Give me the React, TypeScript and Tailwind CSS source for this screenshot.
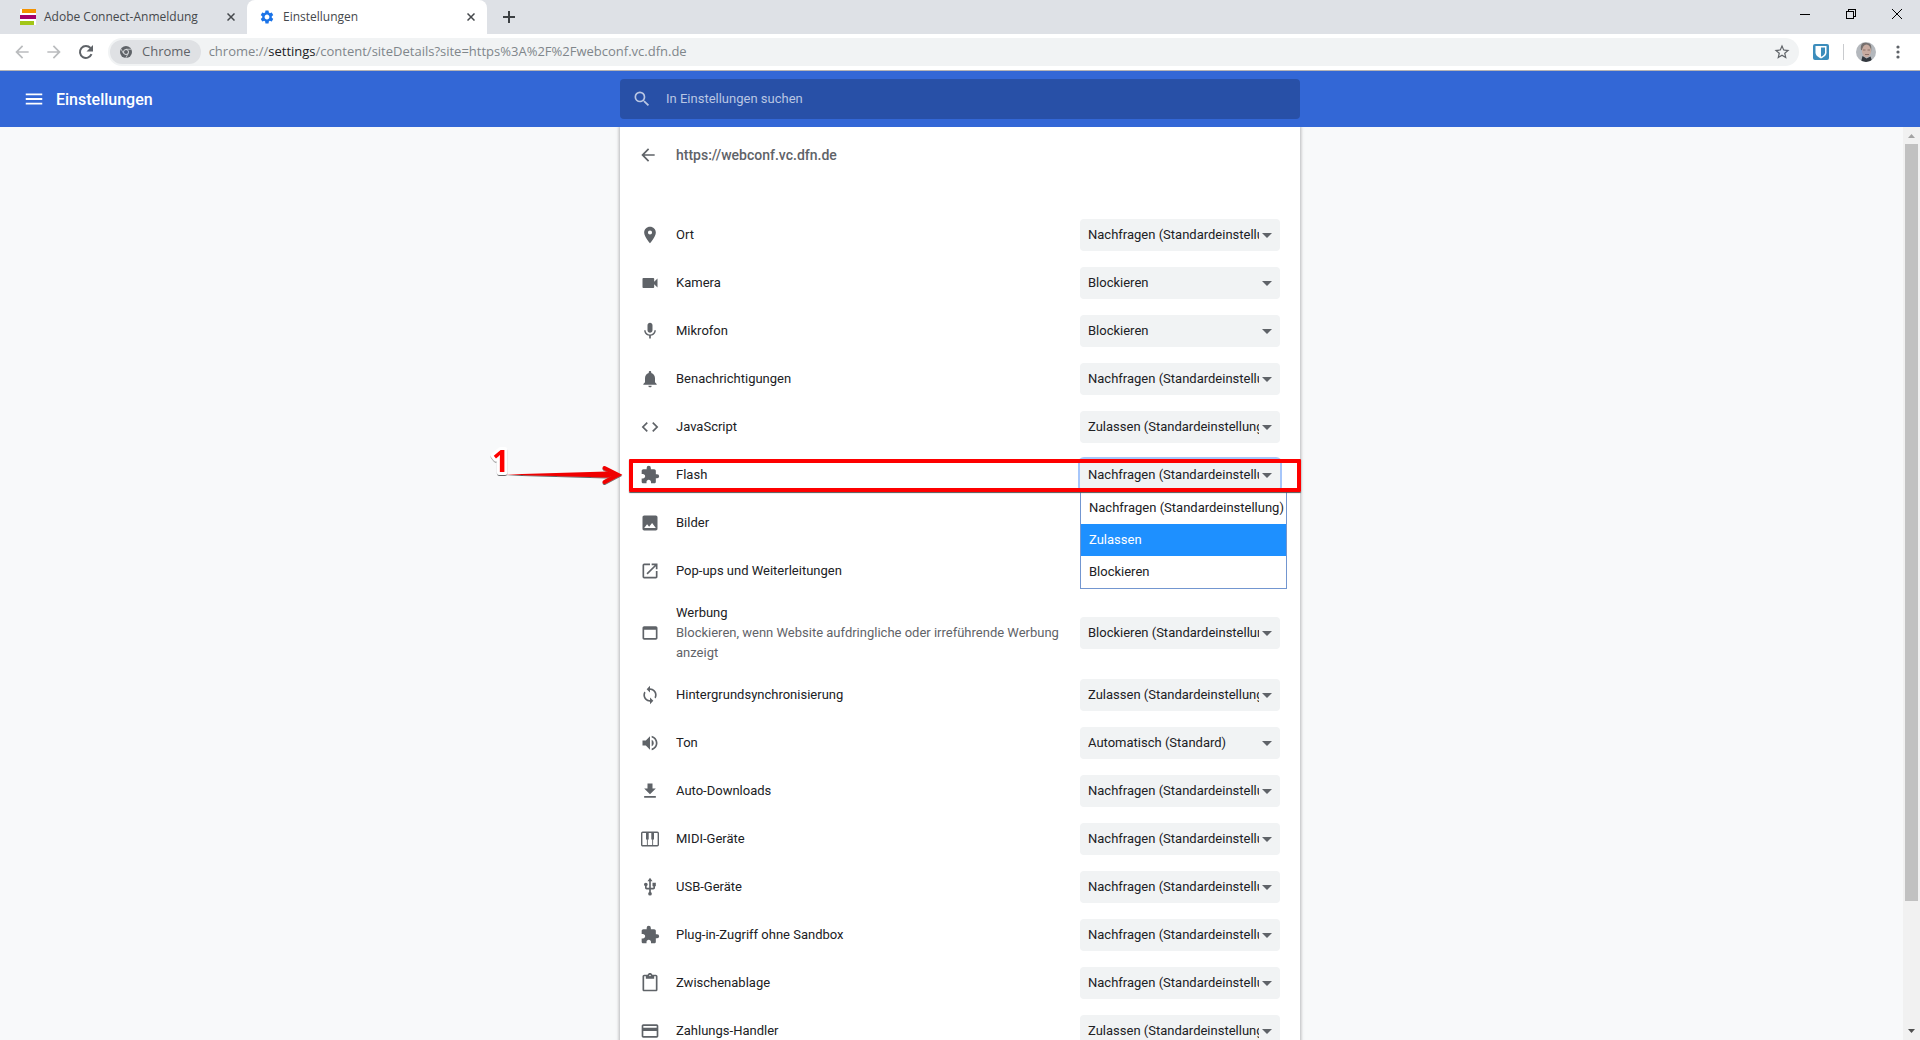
import { useState } from "react";
import type { IconType } from "react-icons";
import {
  MdArrowBack,
  MdCode,
  MdContentPaste,
  MdExtension,
  MdImage,
  MdLocationOn,
  MdMenu,
  MdMic,
  MdNotifications,
  MdOpenInNew,
  MdPayment,
  MdSearch,
  MdSettings,
  MdStarBorder,
  MdSync,
  MdUsb,
  MdVideocam,
  MdVolumeUp,
} from "react-icons/md";

const ASK = "Nachfragen (Standardeinstellung)";
const ALLOW = "Zulassen (Standardeinstellung)";
const BLOCK = "Blockieren (Standardeinstellung)";

const DownloadIcon: IconType = ({ className }) => (
  <svg viewBox="0 0 24 24" fill="currentColor" className={className}>
    <path d="M19 9h-4V3H9v6H5l7 7 7-7zM5 18v2h14v-2H5z" />
  </svg>
);

const WindowIcon: IconType = ({ className }) => (
  <svg viewBox="0 0 24 24" fill="currentColor" className={className}>
    <path d="M19 4H5c-1.11 0-2 .9-2 2v12c0 1.1.89 2 2 2h14c1.1 0 2-.9 2-2V6c0-1.1-.9-2-2-2zm0 14H5V8h14v10z" />
  </svg>
);

const MidiIcon: IconType = ({ className }) => (
  <svg viewBox="0 0 20 20" fill="currentColor" className={className}>
    <rect x="1.7" y="3.2" width="16.600" height="13.600" rx="1" fill="none" stroke="currentColor" strokeWidth="1.400" />
    <path d="M6 3h2.700v7.500H6zM11.300 3H14v7.500h-2.700zM6.900 10h.9v7h-.9zM12.200 10h.9v7h-.9z" />
  </svg>
);

type Permission = { label: string; icon: IconType; value: string; note?: string; open?: boolean };

const permissions: Permission[] = [
  { label: "Ort", icon: MdLocationOn, value: ASK },
  { label: "Kamera", icon: MdVideocam, value: "Blockieren" },
  { label: "Mikrofon", icon: MdMic, value: "Blockieren" },
  { label: "Benachrichtigungen", icon: MdNotifications, value: ASK },
  { label: "JavaScript", icon: MdCode, value: ALLOW },
  { label: "Flash", icon: MdExtension, value: ASK, open: true },
  { label: "Bilder", icon: MdImage, value: ALLOW },
  { label: "Pop-ups und Weiterleitungen", icon: MdOpenInNew, value: BLOCK },
  {
    label: "Werbung",
    icon: WindowIcon,
    value: BLOCK,
    note: "Blockieren, wenn Website aufdringliche oder irreführende Werbung anzeigt",
  },
  { label: "Hintergrundsynchronisierung", icon: MdSync, value: ALLOW },
  { label: "Ton", icon: MdVolumeUp, value: "Automatisch (Standard)" },
  { label: "Auto-Downloads", icon: DownloadIcon, value: ASK },
  { label: "MIDI-Geräte", icon: MidiIcon, value: ASK },
  { label: "USB-Geräte", icon: MdUsb, value: ASK },
  { label: "Plug-in-Zugriff ohne Sandbox", icon: MdExtension, value: ASK },
  { label: "Zwischenablage", icon: MdContentPaste, value: ASK },
  { label: "Zahlungs-Handler", icon: MdPayment, value: ALLOW },
];

const CloseIcon = () => (
  <svg viewBox="0 0 8 8" className="size-2 stroke-[#45484c]" strokeWidth="1.500">
    <path d="M.5.5l7 7M7.500.5l-7 7" />
  </svg>
);

const TabStrip = () => (
  <div className="flex h-[34px] items-stretch bg-[#dee1e6] font-['Open_Sans','Segoe_UI',sans-serif] text-xs text-[#45484c]">
    <div className="flex w-[247px] items-center pl-5">
      <svg viewBox="0 0 16 16" className="size-4">
        <path fill="#fff" d="M0 0h16v16H0z" />
        <path fill="#f39200" d="M2 0h14v4H2z" />
        <path fill="#a5006b" d="M0 6h16v4H0z" />
        <path fill="#a2c617" d="M0 12h14v4H0z" />
      </svg>
      <span className="ml-2 flex-1 whitespace-nowrap">Adobe Connect-Anmeldung</span>
      <button aria-label="Tab schließen" className="p-3">
        <CloseIcon />
      </button>
    </div>
    <div className="flex w-[240px] items-center rounded-t-lg bg-white pl-3">
      <MdSettings className="size-4 text-[#1a73e8]" />
      <span className="ml-2 flex-1">Einstellungen</span>
      <button aria-label="Tab schließen" className="p-3">
        <CloseIcon />
      </button>
    </div>
    <button aria-label="Neuer Tab" className="px-4">
      <svg viewBox="0 0 12 12" className="size-3 stroke-[#3c4043]" strokeWidth="2">
        <path d="M6 0v12M0 6h12" />
      </svg>
    </button>
    <div className="ml-auto flex items-start pt-2 text-black">
      <button aria-label="Minimieren" className="px-[18px]">
        <svg viewBox="0 0 10 12" className="h-3 w-2.5 stroke-current" shapeRendering="crispEdges">
          <path d="M0 6.500h10" />
        </svg>
      </button>
      <button aria-label="Verkleinern" className="px-[18px]">
        <svg viewBox="0 0 10 12" className="h-3 w-2.5 fill-none stroke-current" shapeRendering="crispEdges">
          <path d="M.5 3.500h7v7h-7zM2.500 3.500v-2h7v7h-2" />
        </svg>
      </button>
      <button aria-label="Schließen" className="px-[18px]">
        <svg viewBox="0 0 10 12" className="h-3 w-2.5 stroke-current">
          <path d="M0 1l10 10M10 1L0 11" />
        </svg>
      </button>
    </div>
  </div>
);

const ChromeLogo = () => (
  <svg viewBox="0 0 24 24" className="size-3">
    <circle cx="12" cy="12" r="12" fill="#5f6368" />
    <circle cx="12" cy="12" r="5" fill="none" stroke="#dfe1e4" strokeWidth="2" />
    <path d="M12 6.500h11M7 15L2 6M16.500 15l-5 9" stroke="#dfe1e4" strokeWidth="1.500" />
  </svg>
);

const Toolbar = () => (
  <div className="flex h-[37px] items-center border-b border-[#b6b4b6] bg-white font-['Open_Sans','Segoe_UI',sans-serif] text-[13px]">
    <div className="flex items-center gap-3 px-3">
      <button aria-label="Zurück">
        <MdArrowBack className="size-5 text-[#babcbe]" />
      </button>
      <button aria-label="Vorwärts">
        <MdArrowBack className="size-5 rotate-180 text-[#babcbe]" />
      </button>
      <button aria-label="Neu laden">
        <svg viewBox="0 0 20 20" className="size-5 fill-none stroke-[#5f6368]" strokeWidth="2">
          <path d="M15.500 12.200A6 6 0 1 1 14.500 6" />
          <path d="M17 3v6.500h-6.500z" fill="#5f6368" stroke="none" />
        </svg>
      </button>
    </div>
    <div className="flex h-7 flex-1 items-center rounded-full bg-[#f1f3f4] pr-2 pl-0.5">
      <button className="flex h-6 items-center gap-2.5 rounded-full bg-[#dfe1e4] px-2.5 text-[#5f6368]">
        <ChromeLogo />
        Chrome
      </button>
      <p className="ml-2 flex-1 text-[#80868b]">
        chrome://<span className="text-[#202124]">settings</span>
        /content/siteDetails?site=https%3A%2F%2Fwebconf.vc.dfn.de
      </p>
      <button aria-label="Lesezeichen">
        <MdStarBorder className="size-[18px] text-[#5f6368]" />
      </button>
    </div>
    <div className="flex items-center pr-4 pl-3.5">
      <button aria-label="Bitwarden">
        <svg viewBox="0 0 16 16" className="size-4">
          <rect width="16" height="16" rx="2" fill="#3c8dbc" />
          <path fill="#fff" d="M2.500 2h11v6.500c0 3-3 4.800-5.500 6-2.500-1.200-5.500-3-5.500-6z" />
          <path fill="#3c8dbc" d="M8 3.500h4v5c0 2-2 3.300-4 4.300z" />
        </svg>
      </button>
      <span className="mr-3 ml-3.5 h-4 w-px bg-[#c9cbce]" />
      <button aria-label="Profil">
        <svg viewBox="0 0 20 20" className="size-5">
          <defs>
            <clipPath id="avatar">
              <circle cx="10" cy="10" r="10" />
            </clipPath>
          </defs>
          <g clipPath="url(#avatar)">
            <path fill="#b4b8bd" d="M0 0h20v20H0z" />
            <path fill="#75706e" d="M5 8c-1-7 3-8 6-7 4 0 5 3 4 9z" />
            <ellipse cx="10.500" cy="9" rx="4.500" ry="6.500" fill="#c8aba0" />
            <path fill="#8a7069" d="M7 7.500h2.500v1H7zM11.500 7.500H14v1h-2.500zM9 12h4v1H9z" />
            <path fill="#33383f" d="M5 20l1.500-6 4 2.500 4-2 2 5.500z" />
          </g>
        </svg>
      </button>
      <button aria-label="Menü" className="ml-4 px-1">
        <svg viewBox="0 0 4 14" className="h-3.5 w-1 fill-[#5f6368]">
          <circle cx="2" cy="2" r="1.600" />
          <circle cx="2" cy="7" r="1.600" />
          <circle cx="2" cy="12" r="1.600" />
        </svg>
      </button>
    </div>
  </div>
);

const SettingsHeader = () => (
  <header className="grid h-14 shrink-0 grid-cols-[1fr_680px_1fr] items-center bg-[#3367d6] text-white">
    <div className="flex items-center gap-[11px] pl-[23px]">
      <button aria-label="Hauptmenü">
        <MdMenu className="size-[22px]" />
      </button>
      <h1 className="pt-0.5 text-base font-medium">Einstellungen</h1>
    </div>
    <label className="flex h-10 items-center gap-3.5 rounded-sm bg-[#2850a7] px-3 text-[#b9c6e3]">
      <MdSearch className="size-5" />
      <input
        type="search"
        aria-label="In Einstellungen suchen"
        placeholder="In Einstellungen suchen"
        className="flex-1 bg-transparent text-[13px] outline-none placeholder:text-[#b9c6e3]"
      />
    </label>
  </header>
);

const OptionList = ({ onPick }: { onPick: (value: string) => void }) => (
  <ul className="absolute top-full left-0 z-10 border border-[#7396d0] bg-white">
    {[ASK, "Zulassen", "Blockieren"].map((option) => (
      <li key={option}>
        <button
          onClick={() => onPick(option)}
          className={
            option === "Zulassen"
              ? "flex h-8 w-full items-center bg-[#1e90ff] px-2 whitespace-nowrap text-white"
              : "flex h-8 w-full items-center pr-0.5 pl-2 whitespace-nowrap"
          }
        >
          {option}
        </button>
      </li>
    ))}
  </ul>
);

// Red frame and numbered arrow around the step that has to be done
const StepMarker = () => (
  <div className="pointer-events-none absolute top-2 -right-px left-[9px] z-20 h-[33px] rounded-[1px] border-4 border-[#fe0000] shadow-[0_1px_1px_#555]">
    <svg viewBox="0 0 140 60" className="absolute -top-[23px] -left-36 h-[60px] w-[140px]">
      <defs>
        <filter id="drop" x="-20%" y="-30%" width="140%" height="160%">
          <feDropShadow dx="0" dy="1" stdDeviation="0.700" floodColor="#000" floodOpacity="0.600" />
        </filter>
      </defs>
      <g filter="url(#drop)">
        <path d="M16 34.500L118 31.500L129 35L118 37.500z" fill="#f00000" />
        <path
          d="M115.500 28L129 34.800L115.500 42"
          fill="none"
          stroke="#f00000"
          strokeWidth="4"
          strokeLinecap="round"
        />
      </g>
      <text
        x="3"
        y="32"
        fill="#fe0000"
        stroke="#fff"
        strokeWidth="6"
        strokeLinejoin="round"
        paintOrder="stroke"
        filter="url(#drop)"
        className="font-['Open_Sans',sans-serif] text-[30px] font-bold"
      >
        1
      </text>
    </svg>
  </div>
);

const PermissionRow = ({ label, icon: Icon, value, note, open }: Permission) => {
  const [current, setCurrent] = useState(value);
  const id = `permission-${label}`;

  return (
    <li className="relative flex min-h-12 items-center px-5 py-2">
      <Icon className="size-5 shrink-0 text-[#5f6368]" />
      <div className="ml-4 flex-1 leading-5">
        <label htmlFor={id}>{label}</label>
        {note && <p className="text-[#5f6368]">{note}</p>}
      </div>
      <div className="relative ml-4 w-[200px] shrink-0">
        <select
          id={id}
          value={current}
          onChange={(e) => setCurrent(e.target.value)}
          className={
            open
              ? "block h-8 w-full appearance-none rounded bg-[#f1f3f4] pr-[21px] pl-2 ring-2 ring-[#a6c6fa] outline-none"
              : "block h-8 w-full appearance-none rounded bg-[#f1f3f4] pr-[21px] pl-2 outline-none"
          }
        >
          {[...new Set([value, "Zulassen", "Blockieren"])].map((option) => (
            <option key={option}>{option}</option>
          ))}
        </select>
        <svg
          viewBox="0 0 10 5"
          className="pointer-events-none absolute top-3.5 right-2 h-[5px] w-2.5 fill-[#5f6368]"
        >
          <path d="M0 0h10L5 5z" />
        </svg>
        {open && <OptionList onPick={setCurrent} />}
      </div>
      {open && <StepMarker />}
    </li>
  );
};

const Scrollbar = () => (
  <div className="flex w-[17px] flex-col items-center bg-[#f1f1f1]">
    <svg viewBox="0 0 17 17" className="size-[17px] fill-[#a3a3a3]">
      <path d="M5 11h7L8.500 7z" />
    </svg>
    <div className="w-[13px] grow-[757] bg-[#c1c1c1]" />
    <div className="grow-[122]" />
    <svg viewBox="0 0 17 17" className="size-[17px] fill-[#505050]">
      <path d="M5 6h7L8.500 10z" />
    </svg>
  </div>
);

const App = () => {
  return (
    <div className="flex h-screen flex-col overflow-hidden font-[Roboto,sans-serif] text-[13px] text-[#202124]">
      <TabStrip />
      <Toolbar />
      <SettingsHeader />
      <div className="flex min-h-0 flex-1 bg-[#f8f9fa]">
        <main className="-mr-[17px] flex flex-1 justify-center overflow-hidden">
          <section className="h-max w-[680px] bg-white shadow-[0_0_3px_1px_rgba(60,64,67,0.35)]">
            <div className="flex h-14 items-center gap-[18px] px-[18px]">
              <button aria-label="Zurück">
                <MdArrowBack className="size-5 text-[#5f6368]" />
              </button>
              <h2 className="text-sm font-medium text-[#5f6368]">https://webconf.vc.dfn.de</h2>
            </div>
            <ul className="pt-7">
              {permissions.map((permission) => (
                <PermissionRow key={permission.label} {...permission} />
              ))}
            </ul>
          </section>
        </main>
        <Scrollbar />
      </div>
    </div>
  );
};

export default App;
